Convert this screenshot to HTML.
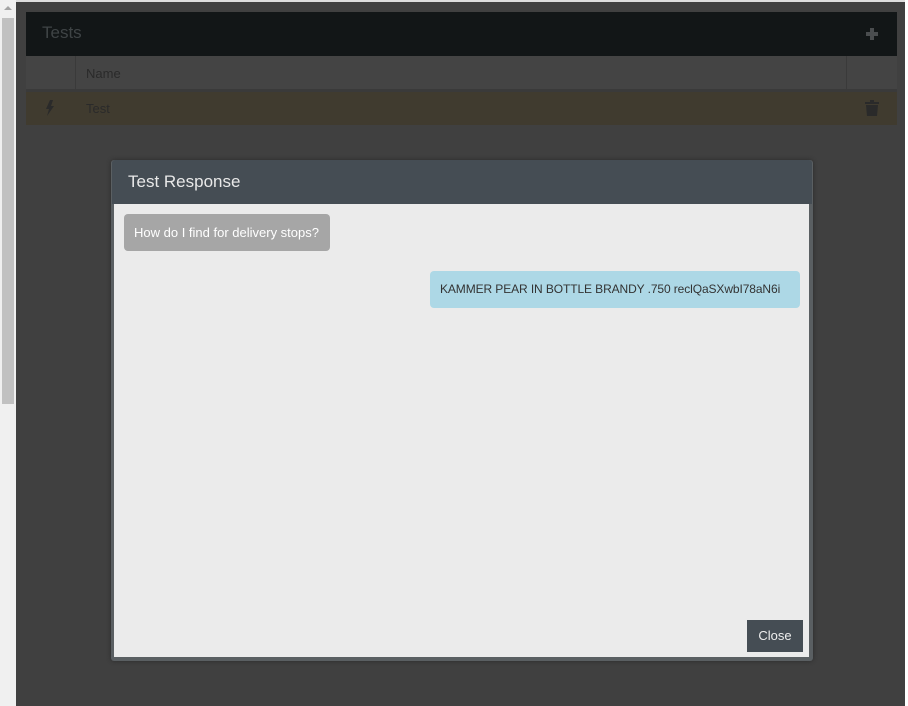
<!DOCTYPE html>
<html><head><style>
body{margin:0;width:908px;height:706px;background:#404040;position:relative;overflow:hidden;font-family:"Liberation Sans",sans-serif;}
div{position:absolute;box-sizing:border-box}
</style></head><body>
<div style="left:0;top:0;width:16px;height:706px;background:#f0f0f0"></div>
<div style="left:2px;top:18px;width:12px;height:386px;background:#c1c1c1"></div>
<div style="left:4px;top:6px;width:0;height:0;border-left:4px solid transparent;border-right:4px solid transparent;border-bottom:4px solid #a3a3a3"></div>
<div style="left:16px;top:0;width:892px;height:2px;background:#ddd"></div>
<div style="left:905px;top:0;width:3px;height:706px;background:#fff"></div>
<div style="left:26px;top:12px;width:871px;height:44px;background:#121617"></div>
<div style="left:42px;top:23px;color:#3f4446;font-size:17px">Tests</div>
<div style="left:866px;top:32px;width:12px;height:4px;background:#4a4d4f"></div>
<div style="left:870px;top:28px;width:4px;height:12px;background:#4a4d4f"></div>
<div style="left:26px;top:56px;width:871px;height:34px;background:#444"></div>
<div style="left:75px;top:56px;width:1px;height:34px;background:#3a3a3a"></div>
<div style="left:846px;top:56px;width:1px;height:34px;background:#3a3a3a"></div>
<div style="left:86px;top:66px;color:#2a2a2a;font-size:13px">Name</div>
<div style="left:26px;top:89px;width:871px;height:3px;background:#3a3a3a"></div>
<div style="left:26px;top:92px;width:871px;height:33px;background:#403b2f"></div>
<div style="left:86px;top:101px;color:#2a2a2a;font-size:13px">Test</div>
<svg style="position:absolute;left:45px;top:100px" width="10" height="16"><path d="M5 0 L1 9 L4 9 L2 16 L9 6 L6 6 L8 0Z" fill="#2a2a2a"/></svg>
<svg style="position:absolute;left:865px;top:100px" width="14" height="16"><path d="M5 0h4v2h5v2H0V2h5z M1 5h12l-1 11H2z" fill="#2a2a2a"/></svg>
<div style="left:111px;top:160px;width:702px;height:501px;background:#5a5f62;border-radius:3px;box-shadow:0 0 4px #2a2a2a"></div>
<div style="left:112px;top:160px;width:700px;height:44px;background:#454d54;border-radius:3px 3px 0 0"></div>
<div style="left:128px;top:172px;color:#e8e8e8;font-size:17px">Test Response</div>
<div style="left:114px;top:204px;width:695px;height:453px;background:#ebebeb"></div>
<div style="left:124px;top:214px;width:206px;height:37px;background:#a6a6a6;border-radius:4px;color:#fff;font-size:13px;padding:11px 0 0 10px">How do I find for delivery stops?</div>
<div style="left:430px;top:271px;width:370px;height:37px;background:#add8e6;border-radius:4px;color:#333;font-size:12px;letter-spacing:-0.1px;padding:11px 0 0 10px;white-space:nowrap">KAMMER PEAR IN BOTTLE BRANDY .750 reclQaSXwbI78aN6i</div>
<div style="left:747px;top:620px;width:56px;height:32px;background:#454d54;color:#eee;font-size:13px;text-align:center;line-height:31px">Close</div>
</body></html>
